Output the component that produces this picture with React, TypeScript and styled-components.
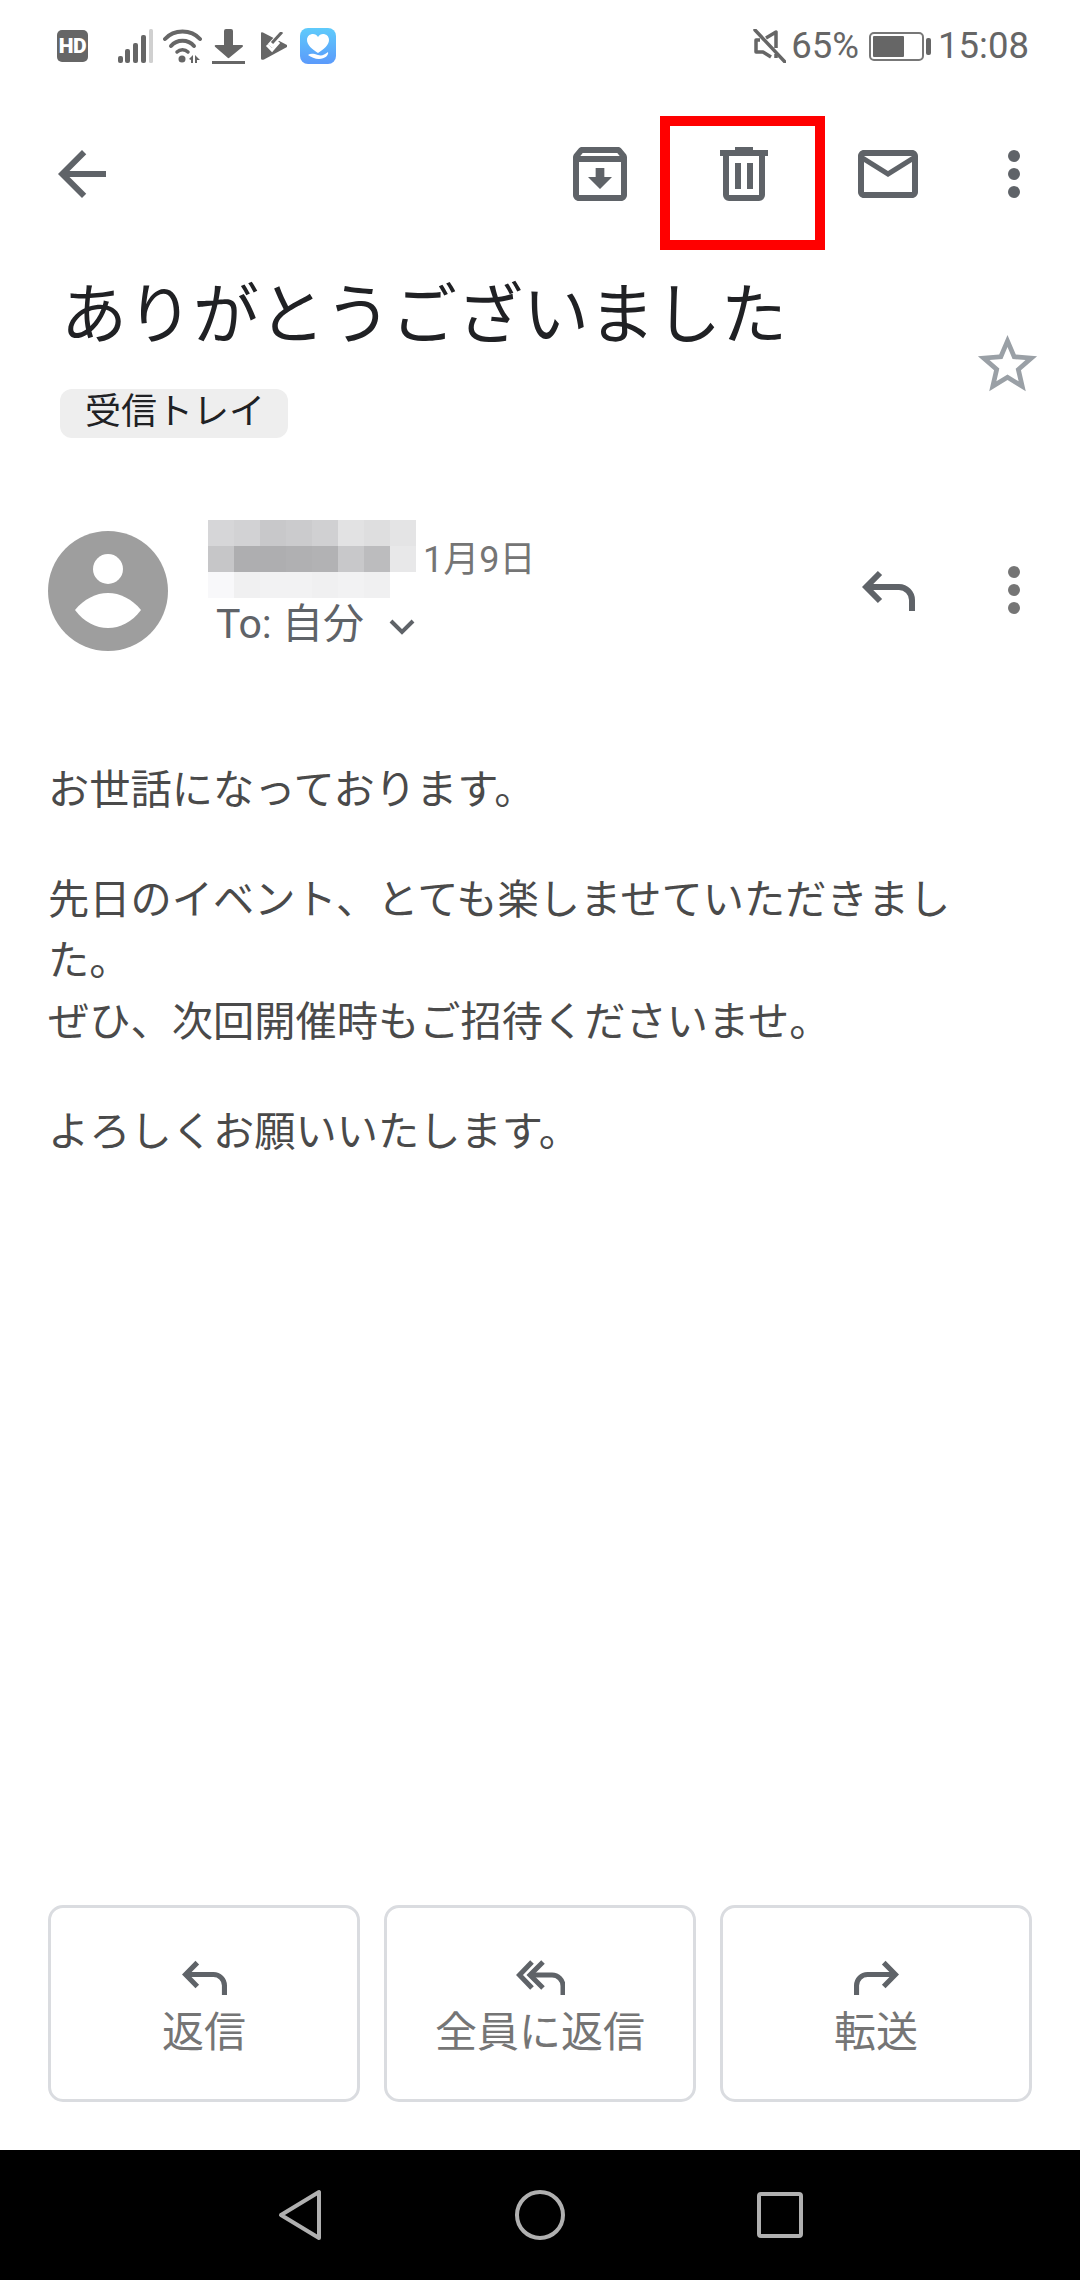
import React from "react";
import styled, { createGlobalStyle } from "styled-components";

const Global = createGlobalStyle`
  html, body { margin: 0; padding: 0; background: #fff; }
  body { font-family: Roboto, "Noto Sans CJK JP", sans-serif; }
`;

const Page = styled.div`
  width: 1080px;
  height: 2280px;
  display: flex;
  flex-direction: column;
  background: #fff;
  overflow: hidden;
`;

const StatusBar = styled.div`
  height: 92px;
  flex: none;
  display: flex;
  align-items: center;
  justify-content: space-between;
  padding: 0 51px 0 57px;
  color: #666;
`;

const StatusGroup = styled.div`
  display: flex;
  align-items: center;
`;

const HdBadge = styled.div`
  width: 31px;
  height: 32px;
  margin-right: 30px;
  border-radius: 5px;
  background: #666;
  color: #fff;
  font-size: 21px;
  font-weight: 900;
  line-height: 32px;
  text-align: center;
  letter-spacing: -0.5px;
`;

const StatusIcon = styled.svg<{ $gap?: number }>`
  display: block;
  flex: none;
  margin-right: ${(p) => p.$gap ?? 0}px;
`;

const StatusText = styled.span`
  font-size: 36.5px;
  line-height: 40px;
  color: #666;
  font-weight: 400;
`;

const Battery = styled.div`
  position: relative;
  box-sizing: border-box;
  width: 55px;
  height: 29px;
  margin: 0 14px 0 10px;
  padding: 2px;
  border: 2px solid #777;
  border-radius: 5px;
  &::after {
    content: "";
    position: absolute;
    left: 55px;
    top: 4px;
    width: 5px;
    height: 17px;
    border-radius: 2px;
    background: #666;
  }
`;

const BatteryFill = styled.div`
  height: 100%;
  background: #666;
  border-radius: 1px;
`;

const Toolbar = styled.div`
  height: 164px;
  flex: none;
  display: flex;
  align-items: center;
  padding: 0 12px 0 10px;
`;

const Spacer = styled.div`
  flex: 1;
`;

const IconButton = styled.div<{ $w?: number }>`
  position: relative;
  width: ${(p) => p.$w ?? 144}px;
  height: 72px;
  flex: none;
  display: flex;
  align-items: center;
  justify-content: center;
  color: #5f6368;
`;

const BackButton = styled(IconButton)`
  width: 72px;
  margin-left: 36px;
`;

const RedFrame = styled.div`
  position: absolute;
  left: -12px;
  top: -22px;
  width: 165px;
  height: 134px;
  box-sizing: border-box;
  border: 10px solid #ff0000;
`;

const Subject = styled.div`
  display: flex;
  align-items: center;
  justify-content: space-between;
  padding: 22px 37px 0 60px;
`;

const SubjectText = styled.div`
  display: flex;
  flex-direction: column;
  align-items: flex-start;
`;

const Title = styled.h1`
  margin: 0 0 0 1px;
  font-size: 66px;
  line-height: 76px;
  font-weight: 400;
  color: #202124;
  white-space: nowrap;
`;

const Chip = styled.span`
  margin-top: 35px;
  height: 49px;
  padding: 0 23px 0 25px;
  border-radius: 12px;
  background: #eeeeee;
  color: #202124;
  font-size: 36px;
  line-height: 47px;
`;

const StarIcon = styled.svg`
  display: block;
  margin-top: 13px;
  color: #9aa0a6;
`;

const SenderRow = styled.div`
  display: flex;
  align-items: flex-start;
  margin-top: 82px;
  padding: 0 12px 0 48px;
`;

const Avatar = styled.svg`
  display: block;
  flex: none;
  margin-top: 11px;
`;

const SenderInfo = styled.div`
  margin-left: 40px;
  display: flex;
  flex-direction: column;
`;

const NameLine = styled.div`
  display: flex;
  align-items: flex-end;
`;

const BlurredName = styled.svg`
  display: block;
  flex: none;
`;

const DateText = styled.span`
  margin: 0 0 17px 7px;
  font-size: 36px;
  line-height: 42px;
  color: #757575;
`;

const ToLine = styled.div`
  display: flex;
  align-items: center;
  margin: 2px 0 0 8px;
  font-size: 41px;
  line-height: 48px;
  color: #5f6368;
`;

const Chevron = styled.svg`
  display: block;
  margin: 6px 0 0 25px;
`;

const SenderActions = styled.div`
  display: flex;
  margin-left: auto;
  align-self: center;
  margin-top: 9px;
`;

const Body = styled.div`
  margin-top: 109px;
  padding-left: 48px;
  max-width: 930px;
  color: #4a4a4a;
  font-size: 41.25px;
  line-height: 61px;
`;

const Paragraph = styled.p`
  margin: 0 0 49px;
`;

const ActionBar = styled.div`
  margin-top: auto;
  display: flex;
  gap: 24px;
  padding: 0 48px 48px;
`;

const ActionButton = styled.div`
  flex: 1;
  box-sizing: border-box;
  height: 197px;
  padding-top: 52px;
  display: flex;
  flex-direction: column;
  align-items: center;
  border: 3px solid #dadce0;
  border-radius: 15px;
  color: #5f6368;
`;

const ActionLabel = styled.span`
  margin-top: 14px;
  font-size: 42px;
  line-height: 48px;
  color: #757575;
`;

const Glyph = styled.svg<{ $flip?: boolean }>`
  display: block;
  transform: ${(p) => (p.$flip ? "scaleX(-1)" : "none")};
`;

const NavBar = styled.div`
  height: 130px;
  flex: none;
  display: flex;
  align-items: center;
  justify-content: center;
  background: #000;
`;

const NavButton = styled.div`
  width: 240px;
  display: flex;
  justify-content: center;
`;

const NavIcon = styled.svg`
  display: block;
  fill: none;
  stroke: #b0b0b0;
  stroke-width: 4;
  stroke-linejoin: round;
`;

const ReplyGlyph = ({ w, h, flip, sw = 6 }: { w: number; h: number; flip?: boolean; sw?: number }) => (
  <Glyph $flip={flip} width={w} height={h} viewBox="0 0 53 41" fill="none" stroke="currentColor" strokeWidth={sw}>
    <path d="M18 3 4.2 17 18 31" />
    <path d="M5 17H37a13 13 0 0 1 13 13V41" />
  </Glyph>
);

const ReplyAllGlyph = () => (
  <Glyph width={49} height={35} viewBox="0 0 49 35" fill="none" stroke="currentColor" strokeWidth={5}>
    <path d="M16 2 3.5 15 16 28" />
    <path d="M27 2 14 15 27 28" />
    <path d="M14 15H36a11 11 0 0 1 11 11V35" />
  </Glyph>
);

const Dots = ({ color }: { color: string }) => (
  <svg width="12" height="48" viewBox="0 0 12 48" fill={color} style={{ display: "block" }}>
    <circle cx="6" cy="6" r="6" />
    <circle cx="6" cy="24" r="6" />
    <circle cx="6" cy="42" r="6" />
  </svg>
);

const blur: string[][] = [
  ["#d6d6d8", "#d2d2d4", "#c8c8ca", "#cbcbcd", "#d0d0d2", "#e2e2e3", "#dededf", "#e4e4e5"],
  ["#c6c6c8", "#aeaeb0", "#aeaeb0", "#b0b0b2", "#b2b2b4", "#c8c8ca", "#bcbcbe", "#e8e8e9"],
  ["#f8f8fa", "#f0f0f1", "#f2f2f3", "#f2f2f3", "#f0f0f1", "#f2f2f3", "#f0f0f1", "#ffffff"],
];

export default function App() {
  return (
    <Page>
      <Global />
      <StatusBar>
        <StatusGroup>
          <HdBadge>HD</HdBadge>
          <StatusIcon $gap={10} width="35" height="34" viewBox="0 0 35 34" fill="#666">
            <rect x="0" y="27" width="5" height="7" rx="2" />
            <rect x="7" y="20" width="5" height="14" rx="2" />
            <rect x="15" y="14" width="5" height="20" rx="2" />
            <rect x="23" y="6" width="5" height="28" rx="2" />
            <rect x="31" y="0" width="4" height="34" rx="1.5" fill="#d0d0d0" />
          </StatusIcon>
          <StatusIcon $gap={10} width="39" height="34" viewBox="0 0 39 34">
            <path d="M2 10C11 0 28 0 37 10" fill="none" stroke="#666" strokeWidth="4" strokeLinecap="round" />
            <path d="M8 17C14 10 25 10 31 17" fill="none" stroke="#666" strokeWidth="4" strokeLinecap="round" />
            <path d="M14 23C17 20 22 20 25 23" fill="none" stroke="#666" strokeWidth="3.5" strokeLinecap="round" />
            <circle cx="19" cy="30" r="3.5" fill="#666" />
            <path d="M26 30l4-4v8h-2v-3zM32 26l5 5h-3v3h-2z" fill="#666" />
          </StatusIcon>
          <StatusIcon $gap={16} width="33" height="35" viewBox="0 0 33 35" fill="#666">
            <path d="M12 2a2 2 0 0 1 2-2h5a2 2 0 0 1 2 2V16h9a1 1 0 0 1 .7 1.7L17 29a1 1 0 0 1-1 0L3 17.7A1 1 0 0 1 3.700 16H12z" />
            <rect x="0" y="32" width="33" height="3" />
          </StatusIcon>
          <StatusIcon $gap={13} width="26" height="28" viewBox="0 0 26 28">
            <path d="M0 1q0-1 2-.5L26 13v2L3 27.500q-3 1-3-1z" fill="#666" />
            <path d="M9 14 21 1" fill="none" stroke="#fff" strokeWidth="6" />
            <path d="M11 11 21 0" fill="none" stroke="#666" strokeWidth="3" />
            <path d="M6 13l5 5 7-8" fill="none" stroke="#fff" strokeWidth="3" />
          </StatusIcon>
          <StatusIcon width="36" height="36" viewBox="0 0 36 36">
            <defs>
              <linearGradient id="appGrad" x1="0" y1="0" x2="0" y2="1">
                <stop offset="0" stopColor="#5fcbfb" />
                <stop offset="1" stopColor="#5b9afb" />
              </linearGradient>
            </defs>
            <rect width="36" height="36" rx="8" fill="url(#appGrad)" />
            <path d="M18 25C12 21 7 17 7 12c0-4 3-6 6-6 2 0 4 1 5 3 1-2 3-3 5-3 3 0 6 2 6 6 0 5-5 9-11 13z" fill="#fff" />
            <path d="M8 27c3-2 6-1 10 0s6 0 10-3c1 3-3 7-9 7-4 0-8-2-11-4z" fill="#fff" />
          </StatusIcon>
        </StatusGroup>
        <StatusGroup>
          <StatusIcon $gap={5} width="33" height="34" viewBox="0 0 33 34" fill="none" stroke="#666" strokeWidth="3.5">
            <path d="M2 1 32 33" strokeLinecap="round" />
            <path d="M7 11H3v12h7l8 5M13 9l10-6v16M23 25v4" strokeLinejoin="round" />
          </StatusIcon>
          <StatusText>65%</StatusText>
          <Battery>
            <BatteryFill style={{ width: "65%" }} />
          </Battery>
          <StatusText>15:08</StatusText>
        </StatusGroup>
      </StatusBar>

      <Toolbar>
        <BackButton>
          <svg width="72" height="72" viewBox="0 0 24 24" fill="currentColor">
            <path d="M20 11H7.830l5.590-5.590L12 4l-8 8 8 8 1.410-1.410L7.830 13H20v-2z" />
          </svg>
        </BackButton>
        <Spacer />
        <IconButton>
          <svg width="72" height="72" viewBox="0 0 24 24" fill="currentColor">
            <path d="M20.540 5.230l-1.390-1.680C18.880 3.210 18.470 3 18 3H6c-.47 0-.88.21-1.160.55L3.460 5.230C3.170 5.570 3 6.020 3 6.500V19c0 1.100.9 2 2 2h14c1.100 0 2-.9 2-2V6.500c0-.48-.17-.93-.46-1.270zM6.240 5h11.520l.81.97H5.440l.8-.97zM5 19V8h14v11H5zm8.450-9h-2.900v3H8l4 4 4-4h-2.550z" />
          </svg>
        </IconButton>
        <IconButton>
          <svg width="48" height="54" viewBox="0 0 48 54" fill="currentColor">
            <rect x="15" y="0" width="18" height="4" />
            <rect x="0" y="3" width="48" height="6" />
            <path d="M3 9h42v39a6 6 0 0 1-6 6H9a6 6 0 0 1-6-6zM9 9v39h30V9z" fillRule="evenodd" />
            <rect x="15" y="16" width="6" height="26" />
            <rect x="27" y="16" width="6" height="26" />
          </svg>
          <RedFrame />
        </IconButton>
        <IconButton>
          <svg width="72" height="72" viewBox="0 0 24 24" fill="currentColor">
            <path d="M22 6c0-1.100-.9-2-2-2H4c-1.100 0-2 .9-2 2v12c0 1.100.9 2 2 2h16c1.100 0 2-.9 2-2V6zm-2 0l-8 5-8-5h16zm0 12H4V8l8 5 8-5v10z" />
          </svg>
        </IconButton>
        <IconButton $w={108}>
          <Dots color="#5f6368" />
        </IconButton>
      </Toolbar>

      <Subject>
        <SubjectText>
          <Title>ありがとうございました</Title>
          <Chip>受信トレイ</Chip>
        </SubjectText>
        <StarIcon width="71" height="71" viewBox="0 0 24 24" fill="currentColor">
          <path d="M22 9.240l-7.190-.62L12 2 9.190 8.630 2 9.240l5.460 4.730L5.820 21 12 17.270 18.180 21l-1.630-7.030L22 9.240zM12 15.400l-3.760 2.270 1-4.280-3.320-2.880 4.380-.38L12 6.100l1.710 4.040 4.380.38-3.320 2.880 1 4.280L12 15.400z" />
        </StarIcon>
      </Subject>

      <SenderRow>
        <Avatar width="120" height="120" viewBox="0 0 120 120">
          <circle cx="60" cy="60" r="60" fill="#9e9e9e" />
          <ellipse cx="60" cy="38" rx="15" ry="15" fill="#fff" />
          <path d="M27 79C36 68 48 62 60 62s24 6 33 17C84 91 72 97 60 97S36 91 27 79z" fill="#fff" />
        </Avatar>
        <SenderInfo>
          <NameLine>
            <BlurredName width="208" height="78" viewBox="0 0 208 78">
              {blur.map((row, r) =>
                row.map((c, i) => <rect key={`${r}-${i}`} x={i * 26} y={r * 26} width="26" height="26" fill={c} />)
              )}
            </BlurredName>
            <DateText>1月9日</DateText>
          </NameLine>
          <ToLine>
            To: 自分
            <Chevron width="26" height="16" viewBox="0 0 26 16" fill="none" stroke="#5f6368" strokeWidth="4">
              <path d="M2 2 13 13 24 2" />
            </Chevron>
          </ToLine>
        </SenderInfo>
        <SenderActions>
          <IconButton>
            <ReplyGlyph w={53} h={41} />
          </IconButton>
          <IconButton $w={108}>
            <Dots color="#757575" />
          </IconButton>
        </SenderActions>
      </SenderRow>

      <Body>
        <Paragraph>お世話になっております。</Paragraph>
        <Paragraph>
          先日のイベント、とても楽しませていただきました。
          <br />
          ぜひ、次回開催時もご招待くださいませ。
        </Paragraph>
        <Paragraph>よろしくお願いいたします。</Paragraph>
      </Body>

      <ActionBar>
        <ActionButton>
          <ReplyGlyph w={45} h={35} sw={6} />
          <ActionLabel>返信</ActionLabel>
        </ActionButton>
        <ActionButton>
          <ReplyAllGlyph />
          <ActionLabel>全員に返信</ActionLabel>
        </ActionButton>
        <ActionButton>
          <ReplyGlyph w={45} h={35} sw={6} flip />
          <ActionLabel>転送</ActionLabel>
        </ActionButton>
      </ActionBar>

      <NavBar>
        <NavButton>
          <NavIcon width="54" height="54" viewBox="0 0 54 54">
            <path d="M8 27 46 4V50z" />
          </NavIcon>
        </NavButton>
        <NavButton>
          <NavIcon width="54" height="54" viewBox="0 0 54 54">
            <circle cx="27" cy="27" r="23" />
          </NavIcon>
        </NavButton>
        <NavButton>
          <NavIcon width="54" height="54" viewBox="0 0 54 54">
            <rect x="6" y="6" width="42" height="42" rx="2" />
          </NavIcon>
        </NavButton>
      </NavBar>
    </Page>
  );
}
